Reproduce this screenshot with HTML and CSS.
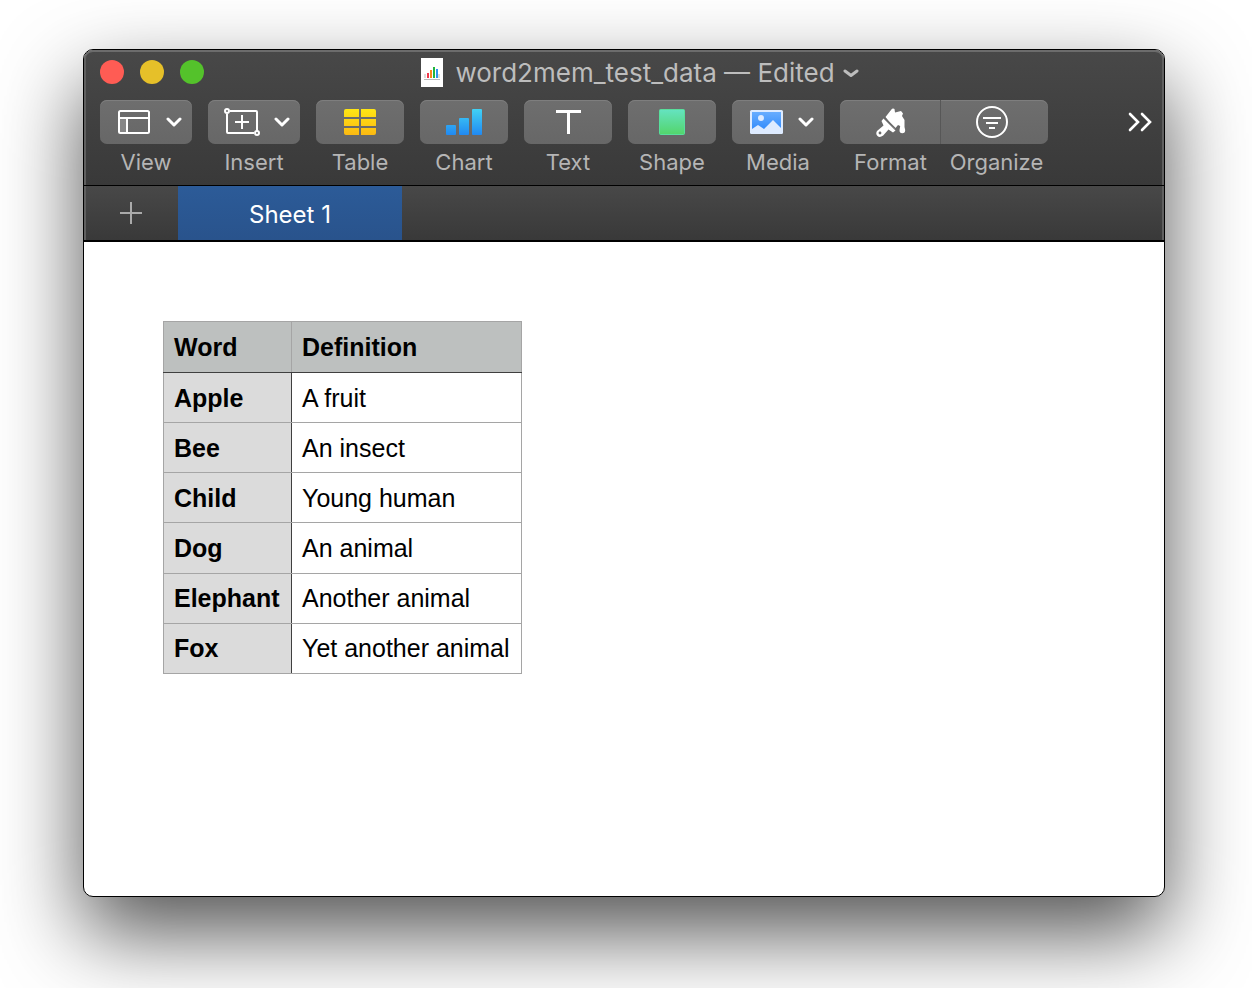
FILE: index.html
```html
<!DOCTYPE html>
<html lang="en">
<head>
<meta charset="utf-8">
<meta name="viewport" content="width=device-width, initial-scale=1">
<title>word2mem_test_data</title>
<link rel="stylesheet" href="styles.css">
</head>
<body>
<main class="window">
  <header class="chrome">
    <div class="titlebar">
      <div class="lights">
        <button class="light light-close" aria-label="Close"></button>
        <button class="light light-minimize" aria-label="Minimize"></button>
        <button class="light light-zoom" aria-label="Zoom"></button>
      </div>
      <button class="doc-title">
        <svg class="doc-icon" width="22" height="30" viewBox="0 0 22 30" aria-hidden="true">
          <rect width="22" height="29" fill="#fff"/>
          <path d="M4 16v4M18 16v4" stroke="#ddd" stroke-width="2"/>
          <rect x="3" y="21" width="16" height="1" fill="#bbb"/>
          <rect x="6" y="15" width="2" height="5" fill="#f0394b"/>
          <rect x="9" y="12" width="2" height="8" fill="#f8861b"/>
          <rect x="12" y="9" width="2" height="11" fill="#21b53c"/>
          <rect x="15" y="11" width="2" height="9" fill="#2d95ee"/>
        </svg>
        <span>word2mem_test_data — Edited</span>
        <svg class="title-chevron" width="16" height="10" viewBox="0 0 16 10" aria-hidden="true"><path d="M2 3l6 4.500L14 3"/></svg>
      </button>
    </div>

    <nav class="toolbar" aria-label="Toolbar">
      <button class="tool tool-menu">
        <span class="face">
          <svg width="36" height="24" viewBox="-2 0 36 24" aria-hidden="true"><path d="M2 8h7v14H2z" fill="#999" opacity=".6"/><rect x="1" y="1" width="30" height="22" rx="1.500" fill="none" stroke="#fff" stroke-width="2"/><path d="M1 8h30M9 8v15" stroke="#fff" stroke-width="2"/></svg>
          <svg class="chevron" width="16" height="10" viewBox="0 0 16 10" aria-hidden="true"><path d="M2 2l6 6 6-6"/></svg>
        </span>
        <span class="label">View</span>
      </button>
      <button class="tool tool-menu">
        <span class="face">
          <svg width="36" height="28" viewBox="0 0 36 28" aria-hidden="true"><g fill="none" stroke="#fff" stroke-width="2"><path d="M6 3h26q1 0 1 1v19M30 25H4q-1 0-1-1V6M18 7v14M11 14h14"/><circle cx="3" cy="3" r="2"/><circle cx="33" cy="25" r="2"/></g></svg>
          <svg class="chevron" width="16" height="10" viewBox="0 0 16 10" aria-hidden="true"><path d="M2 2l6 6 6-6"/></svg>
        </span>
        <span class="label">Insert</span>
      </button>
      <button class="tool">
        <span class="face">
          <svg width="32" height="26" viewBox="0 0 32 26" aria-hidden="true"><defs><linearGradient id="yellow" x1="0" y1="0" x2="0" y2="26" gradientUnits="userSpaceOnUse"><stop stop-color="#ffe614"/><stop offset="1" stop-color="#fbb912"/></linearGradient></defs><path fill="url(#yellow)" d="M2 0h13v8H0V2q0-2 2-2zM17 0h13q2 0 2 2v6H17zM0 10h15v7H0zM17 10h15v7H17zM0 19h15v7H2q-2 0-2-2zM17 19h15v5q0 2-2 2H17z"/></svg>
        </span>
        <span class="label">Table</span>
      </button>
      <button class="tool">
        <span class="face">
          <svg width="36" height="26" viewBox="0 0 36 26" aria-hidden="true"><defs><linearGradient id="blue" x1="0" y1="0" x2="0" y2="26" gradientUnits="userSpaceOnUse"><stop stop-color="#41d2f5"/><stop offset="1" stop-color="#2189f2"/></linearGradient></defs><g fill="url(#blue)"><rect y="16" width="10" height="10" rx="1"/><rect x="13" y="9" width="10" height="17" rx="1"/><rect x="26" width="10" height="26" rx="1"/></g></svg>
        </span>
        <span class="label">Chart</span>
      </button>
      <button class="tool">
        <span class="face">
          <svg width="26" height="24" viewBox="-1 0 26 24" aria-hidden="true"><path d="M0 1.500h25M12.500 1v23" stroke="#fff" stroke-width="3"/></svg>
        </span>
        <span class="label">Text</span>
      </button>
      <button class="tool">
        <span class="face">
          <svg width="26" height="26" viewBox="0 0 26 26" aria-hidden="true"><defs><linearGradient id="green" x1="0" y1="0" x2="0" y2="1"><stop stop-color="#65e3c1"/><stop offset="1" stop-color="#53d56b"/></linearGradient></defs><rect x=".5" y=".5" width="25" height="25" rx="1" fill="url(#green)" stroke="#58df9c"/></svg>
        </span>
        <span class="label">Shape</span>
      </button>
      <button class="tool tool-menu">
        <span class="face">
          <svg width="36" height="24" viewBox="-2 0 36 24" aria-hidden="true"><defs><linearGradient id="sky" x1="0" y1="0" x2="0" y2="1"><stop stop-color="#68adff"/><stop offset="1" stop-color="#348cfb"/></linearGradient></defs><rect width="33" height="24" rx="1.500" fill="#deebff"/><path d="M2 2h29v16l-8-8-9 9-6-4-6 4z" fill="url(#sky)"/><circle cx="11" cy="8" r="3" fill="#deebff"/></svg>
          <svg class="chevron" width="16" height="10" viewBox="0 0 16 10" aria-hidden="true"><path d="M2 2l6 6 6-6"/></svg>
        </span>
        <span class="label">Media</span>
      </button>
      <div class="segmented">
        <button class="tool tool-format">
          <span class="face">
            <svg width="30" height="29" viewBox="0 0 30 29" aria-hidden="true"><path d="M9.500 9L16 .800Q17.500 0 18.500 1L19 4.500l6-1.500 2 2.500-1 2.500 2.500 4v7l.7 3q0 3.200-2.900 3.200T23.500 22l.7-4-2.200-1-3.300 4z" fill="#fff"/><path d="M7.500 10.500L19.500 22.500l-2.500 2-4.500-3-5.300 6Q3.700 30 1.500 28T1 23l6.500-5.500-2-4.500z" fill="#fff"/><path d="M8.200 9.500l12 12" stroke="#6b6b6b" stroke-width="1.400"/><circle cx="4" cy="25" r="1.400" fill="#6b6b6b"/></svg>
          </span>
          <span class="label">Format</span>
        </button>
        <button class="tool tool-organize">
          <span class="face">
            <svg width="32" height="32" viewBox="0 0 32 32" aria-hidden="true"><g fill="none" stroke="#fff" stroke-width="2"><circle cx="16" cy="16" r="15"/><path d="M7 12h18M10 17h12M13 22h6"/></g></svg>
          </span>
          <span class="label">Organize</span>
        </button>
      </div>
      <button class="overflow" aria-label="More toolbar items">
        <svg width="24" height="20" viewBox="0 0 24 20" aria-hidden="true"><path d="M2 2l8 8-8 8M14 2l8 8-8 8" fill="none" stroke="#fff" stroke-width="2.600" stroke-linecap="round"/></svg>
      </button>
    </nav>
  </header>

  <nav class="sheets" aria-label="Sheets">
    <button class="add-sheet" aria-label="Add sheet">
      <svg width="22" height="22" viewBox="0 0 22 22" aria-hidden="true"><path d="M0 11h22M11 0v22" stroke="#aaa" stroke-width="2"/></svg>
    </button>
    <button class="sheet-tab">Sheet 1</button>
  </nav>

  <section class="canvas">
    <table class="grid">
      <thead>
        <tr><th scope="col" class="word">Word</th><th scope="col" class="definition">Definition</th></tr>
      </thead>
      <tbody>
        <tr><th scope="row">Apple</th><td>A fruit</td></tr>
        <tr><th scope="row">Bee</th><td>An insect</td></tr>
        <tr><th scope="row">Child</th><td>Young human</td></tr>
        <tr><th scope="row">Dog</th><td>An animal</td></tr>
        <tr><th scope="row">Elephant</th><td>Another animal</td></tr>
        <tr><th scope="row">Fox</th><td>Yet another animal</td></tr>
      </tbody>
    </table>
  </section>
</main>
</body>
</html>
```
FILE: styles.css
```css
* {
  box-sizing: border-box;
}

body {
  margin: 0;
  min-height: 100vh;
  padding: 49px 87px 91px 83px;
  display: flex;
  background: #fff;
  font-family: Inter, "Liberation Sans", sans-serif;
  overflow: hidden;
}

button {
  margin: 0;
  padding: 0;
  border: 0;
  background: none;
  color: inherit;
  font: inherit;
}

svg {
  display: block;
  flex: none;
}

.window {
  flex: 1;
  display: flex;
  flex-direction: column;
  border: 1px solid #000;
  border-radius: 10px;
  overflow: hidden;
  background: #fff;
  box-shadow: 0 36px 84px rgba(0, 0, 0, 0.68);
}

.chrome {
  padding: 0 12px 9px 16px;
  border-bottom: 1px solid #000;
  border-radius: 9px 9px 0 0;
  background: linear-gradient(#484848, #393939);
  box-shadow: inset 0 2px #6c6c6c, inset 2px 0 #606060, inset -2px 0 #606060;
}

.titlebar {
  height: 44px;
  display: grid;
  grid-template-columns: 1fr auto 1fr;
  align-items: center;
}

.lights {
  display: flex;
  gap: 16px;
}

.light {
  width: 24px;
  height: 24px;
  border-radius: 50%;
}

.light-close {
  background: #ff5c54;
}

.light-minimize {
  background: #e6c029;
}

.light-zoom {
  background: #54c22b;
}

.doc-title {
  display: flex;
  align-items: center;
  gap: 12px;
  padding: 2px 0 0 28px;
  color: #bdbdbd;
  font-size: 26px;
  line-height: 32px;
  white-space: nowrap;
}

.doc-title span {
  margin-right: -4px;
}

.title-chevron {
  fill: none;
  stroke: #bdbdbd;
  stroke-width: 3;
  stroke-linecap: round;
  stroke-linejoin: round;
}

.toolbar {
  display: flex;
  align-items: flex-start;
  gap: 16px;
  padding-top: 6px;
}

.tool {
  width: 88px;
  flex: none;
  color: #b5b5b5;
  font-size: 22px;
  line-height: 28px;
}

.tool-menu {
  width: 92px;
}

.tool-format {
  width: 101px;
}

.tool-organize {
  width: 107px;
}

.face {
  display: flex;
  align-items: center;
  justify-content: center;
  height: 44px;
  margin-bottom: 4px;
  border-radius: 7px;
  background: linear-gradient(#6e6e6e, #676767);
  box-shadow: inset 0 1px #7e7e7e;
}

.tool-menu .face {
  justify-content: space-between;
  padding: 0 10px 0 16px;
}

.chevron {
  fill: none;
  stroke: #fff;
  stroke-width: 3;
  stroke-linecap: round;
  stroke-linejoin: round;
}

.label {
  display: block;
  text-align: center;
}

.segmented {
  display: flex;
}

.tool-format .face {
  padding-left: 2px;
  border-right: 1px solid #575757;
  border-radius: 7px 0 0 7px;
}

.tool-organize .face {
  border-radius: 0 7px 7px 0;
  padding-right: 6px;
}

.tool-organize .label {
  padding-left: 4px;
}

.overflow {
  height: 44px;
  margin-left: auto;
}

.sheets {
  display: flex;
  height: 56px;
  border-bottom: 2px solid #000;
  background: linear-gradient(#484848, #393939);
  box-shadow: inset 2px 0 #606060, inset -2px 0 #606060;
}

.add-sheet {
  display: flex;
  align-items: center;
  justify-content: center;
  width: 94px;
}

.sheet-tab {
  width: 224px;
  padding-top: 2px;
  background: linear-gradient(#2c5b98, #29538c);
  color: #fff;
  font-size: 24px;
}

.canvas {
  flex: 1;
  padding: 79px;
}

.grid {
  height: 353px;
  border-collapse: collapse;
  color: #000;
  font-family: "Liberation Sans", Arial, sans-serif;
  font-size: 25px;
  line-height: 30px;
}

.grid th,
.grid td {
  height: 50px;
  padding: 0 10px;
  border: 1px solid #a5a5a5;
  text-align: left;
  white-space: nowrap;
}

.grid thead th {
  height: 51px;
  border-bottom-color: #3f3f3f;
  background: #bdc0bf;
}

.grid .word {
  width: 128px;
}

.grid .definition {
  width: 230px;
}

.grid tbody th {
  border-right-color: #3f3f3f;
  background: #dbdbdb;
}
```
